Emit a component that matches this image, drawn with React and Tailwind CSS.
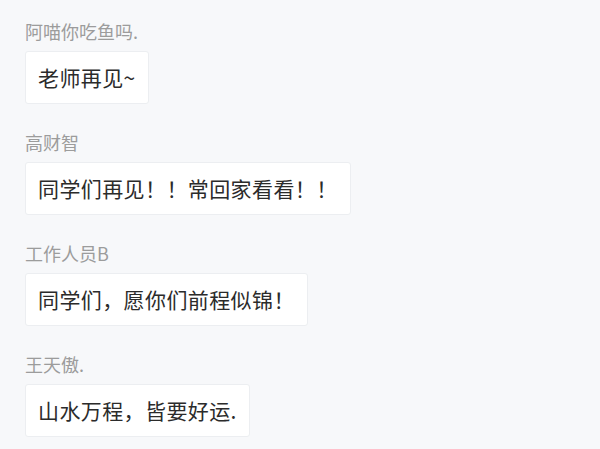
import React from "react";

const messages = [
  { name: "阿喵你吃鱼吗.", text: "老师再见~" },
  { name: "高财智", text: "同学们再见！！常回家看看！！" },
  { name: "工作人员B", text: "同学们，愿你们前程似锦！" },
  { name: "王天傲.", text: "山水万程，皆要好运." },
];

export default function App() {
  return (
    <div
      className="w-[600px] h-[449px] overflow-hidden bg-[#f7f8fa] pl-[25px] pt-[19px]"
      style={{ fontFamily: '"Noto Sans CJK SC", "Noto Sans", sans-serif' }}
    >
      <div className="flex flex-col gap-[26px]">
        {messages.map((m, i) => (
          <div key={i} className="flex flex-col items-start gap-[8px]">
            <p className="text-[18px] leading-[24px] text-[#9c9c9c]">{m.name}</p>
            <div className="rounded-[3px] border border-[#eceef1] bg-white px-[12px] py-[10px] pb-[11px]">
              <p className="text-[21px] leading-[30px] tracking-[0.4px] text-[#2b2b2b]">{m.text}</p>
            </div>
          </div>
        ))}
      </div>
    </div>
  );
}
